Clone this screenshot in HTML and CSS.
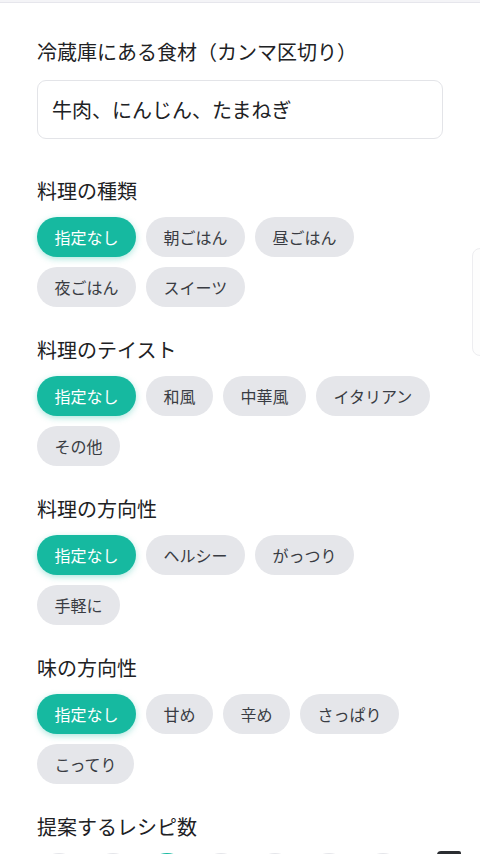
FILE: index.html
```html
<!DOCTYPE html>
<html lang="ja">
<head>
<meta charset="utf-8">
<title>レシピ提案</title>
<link rel="stylesheet" href="styles.css">
</head>
<body>
<div class="topbar"></div>
<main class="form">
  <section class="field field-input">
    <label class="label" for="ingredients">冷蔵庫にある食材（カンマ区切り）</label>
    <input id="ingredients" class="text-input" type="text" value="牛肉、にんじん、たまねぎ">
  </section>

  <section class="field">
    <h2 class="label">料理の種類</h2>
    <div class="chips">
      <span class="chip active">指定なし</span>
      <span class="chip">朝ごはん</span>
      <span class="chip">昼ごはん</span>
      <span class="chip">夜ごはん</span>
      <span class="chip">スイーツ</span>
    </div>
  </section>

  <section class="field">
    <h2 class="label">料理のテイスト</h2>
    <div class="chips">
      <span class="chip active">指定なし</span>
      <span class="chip">和風</span>
      <span class="chip">中華風</span>
      <span class="chip">イタリアン</span>
      <span class="chip">その他</span>
    </div>
  </section>

  <section class="field">
    <h2 class="label">料理の方向性</h2>
    <div class="chips">
      <span class="chip active">指定なし</span>
      <span class="chip">ヘルシー</span>
      <span class="chip">がっつり</span>
      <span class="chip">手軽に</span>
    </div>
  </section>

  <section class="field">
    <h2 class="label">味の方向性</h2>
    <div class="chips">
      <span class="chip active">指定なし</span>
      <span class="chip">甘め</span>
      <span class="chip">辛め</span>
      <span class="chip">さっぱり</span>
      <span class="chip">こってり</span>
    </div>
  </section>

  <section class="field">
    <h2 class="label">提案するレシピ数</h2>
    <div class="counts">
      <span class="count">1</span>
      <span class="count">2</span>
      <span class="count active">3</span>
      <span class="count">4</span>
      <span class="count">5</span>
      <span class="count">6</span>
      <span class="count">7</span>
    </div>
  </section>
</main>
<div class="side-tab"></div>
<div class="fab"></div>
</body>
</html>
```

FILE: styles.css
```css
html, body {
  margin: 0;
  padding: 0;
  overflow: hidden;
  background: #ffffff;
}

body {
  font-family: "Noto Sans CJK JP", "Noto Sans", sans-serif;
  color: #1f2328;
  position: relative;
  height: 854px;
}

.topbar {
  height: 2px;
  background: #f4f4f7;
  border-bottom: 1px solid #e6e6ec;
}

.form {
  padding: 34px 37px 0 37px;
}

.field {
  margin-bottom: 28px;
}

.field-input {
  margin-bottom: 37px;
}

.label {
  display: block;
  margin: 0;
  font-size: 20px;
  font-weight: 400;
  line-height: 30px;
  color: #202124;
}

.field-input .label {
  margin-bottom: 13px;
}

.text-input {
  display: block;
  box-sizing: border-box;
  width: 100%;
  height: 59px;
  margin: 0;
  padding: 0 14px;
  border: 1px solid #e3e4e8;
  border-radius: 9px;
  background: #ffffff;
  font-family: "Noto Sans CJK JP", "Noto Sans", sans-serif;
  font-size: 20px;
  color: #202124;
  outline: none;
}

.chips {
  display: flex;
  flex-wrap: wrap;
  gap: 10px;
  margin-top: 11px;
}

.chip {
  display: inline-block;
  height: 40px;
  line-height: 40px;
  padding: 0 17.5px;
  border-radius: 20px;
  background: #e5e6ea;
  color: #393c43;
  font-size: 16px;
  white-space: nowrap;
}

.chip.active {
  background: #16b9a0;
  color: #ffffff;
  box-shadow: 0 2px 6px rgba(22, 185, 160, 0.35);
}

.counts {
  display: flex;
  gap: 10px;
  margin-top: 11px;
}

.count {
  display: flex;
  align-items: center;
  justify-content: center;
  width: 44px;
  height: 44px;
  padding-top: 16px;
  box-sizing: border-box;
  border-radius: 50%;
  background: #e5e6ea;
  color: #393c43;
  font-size: 16px;
  line-height: 20px;
  flex: none;
}

.count.active {
  background: #16b9a0;
  color: #ffffff;
}

.side-tab {
  position: absolute;
  left: 472px;
  top: 248px;
  width: 24px;
  height: 106px;
  border: 1px solid #ededf0;
  border-radius: 8px;
  background: #fdfdfd;
}

.fab {
  position: absolute;
  left: 437px;
  top: 851px;
  width: 24px;
  height: 20px;
  border-radius: 4px 2px 0 0;
  background: #2b2d31;
}
```
